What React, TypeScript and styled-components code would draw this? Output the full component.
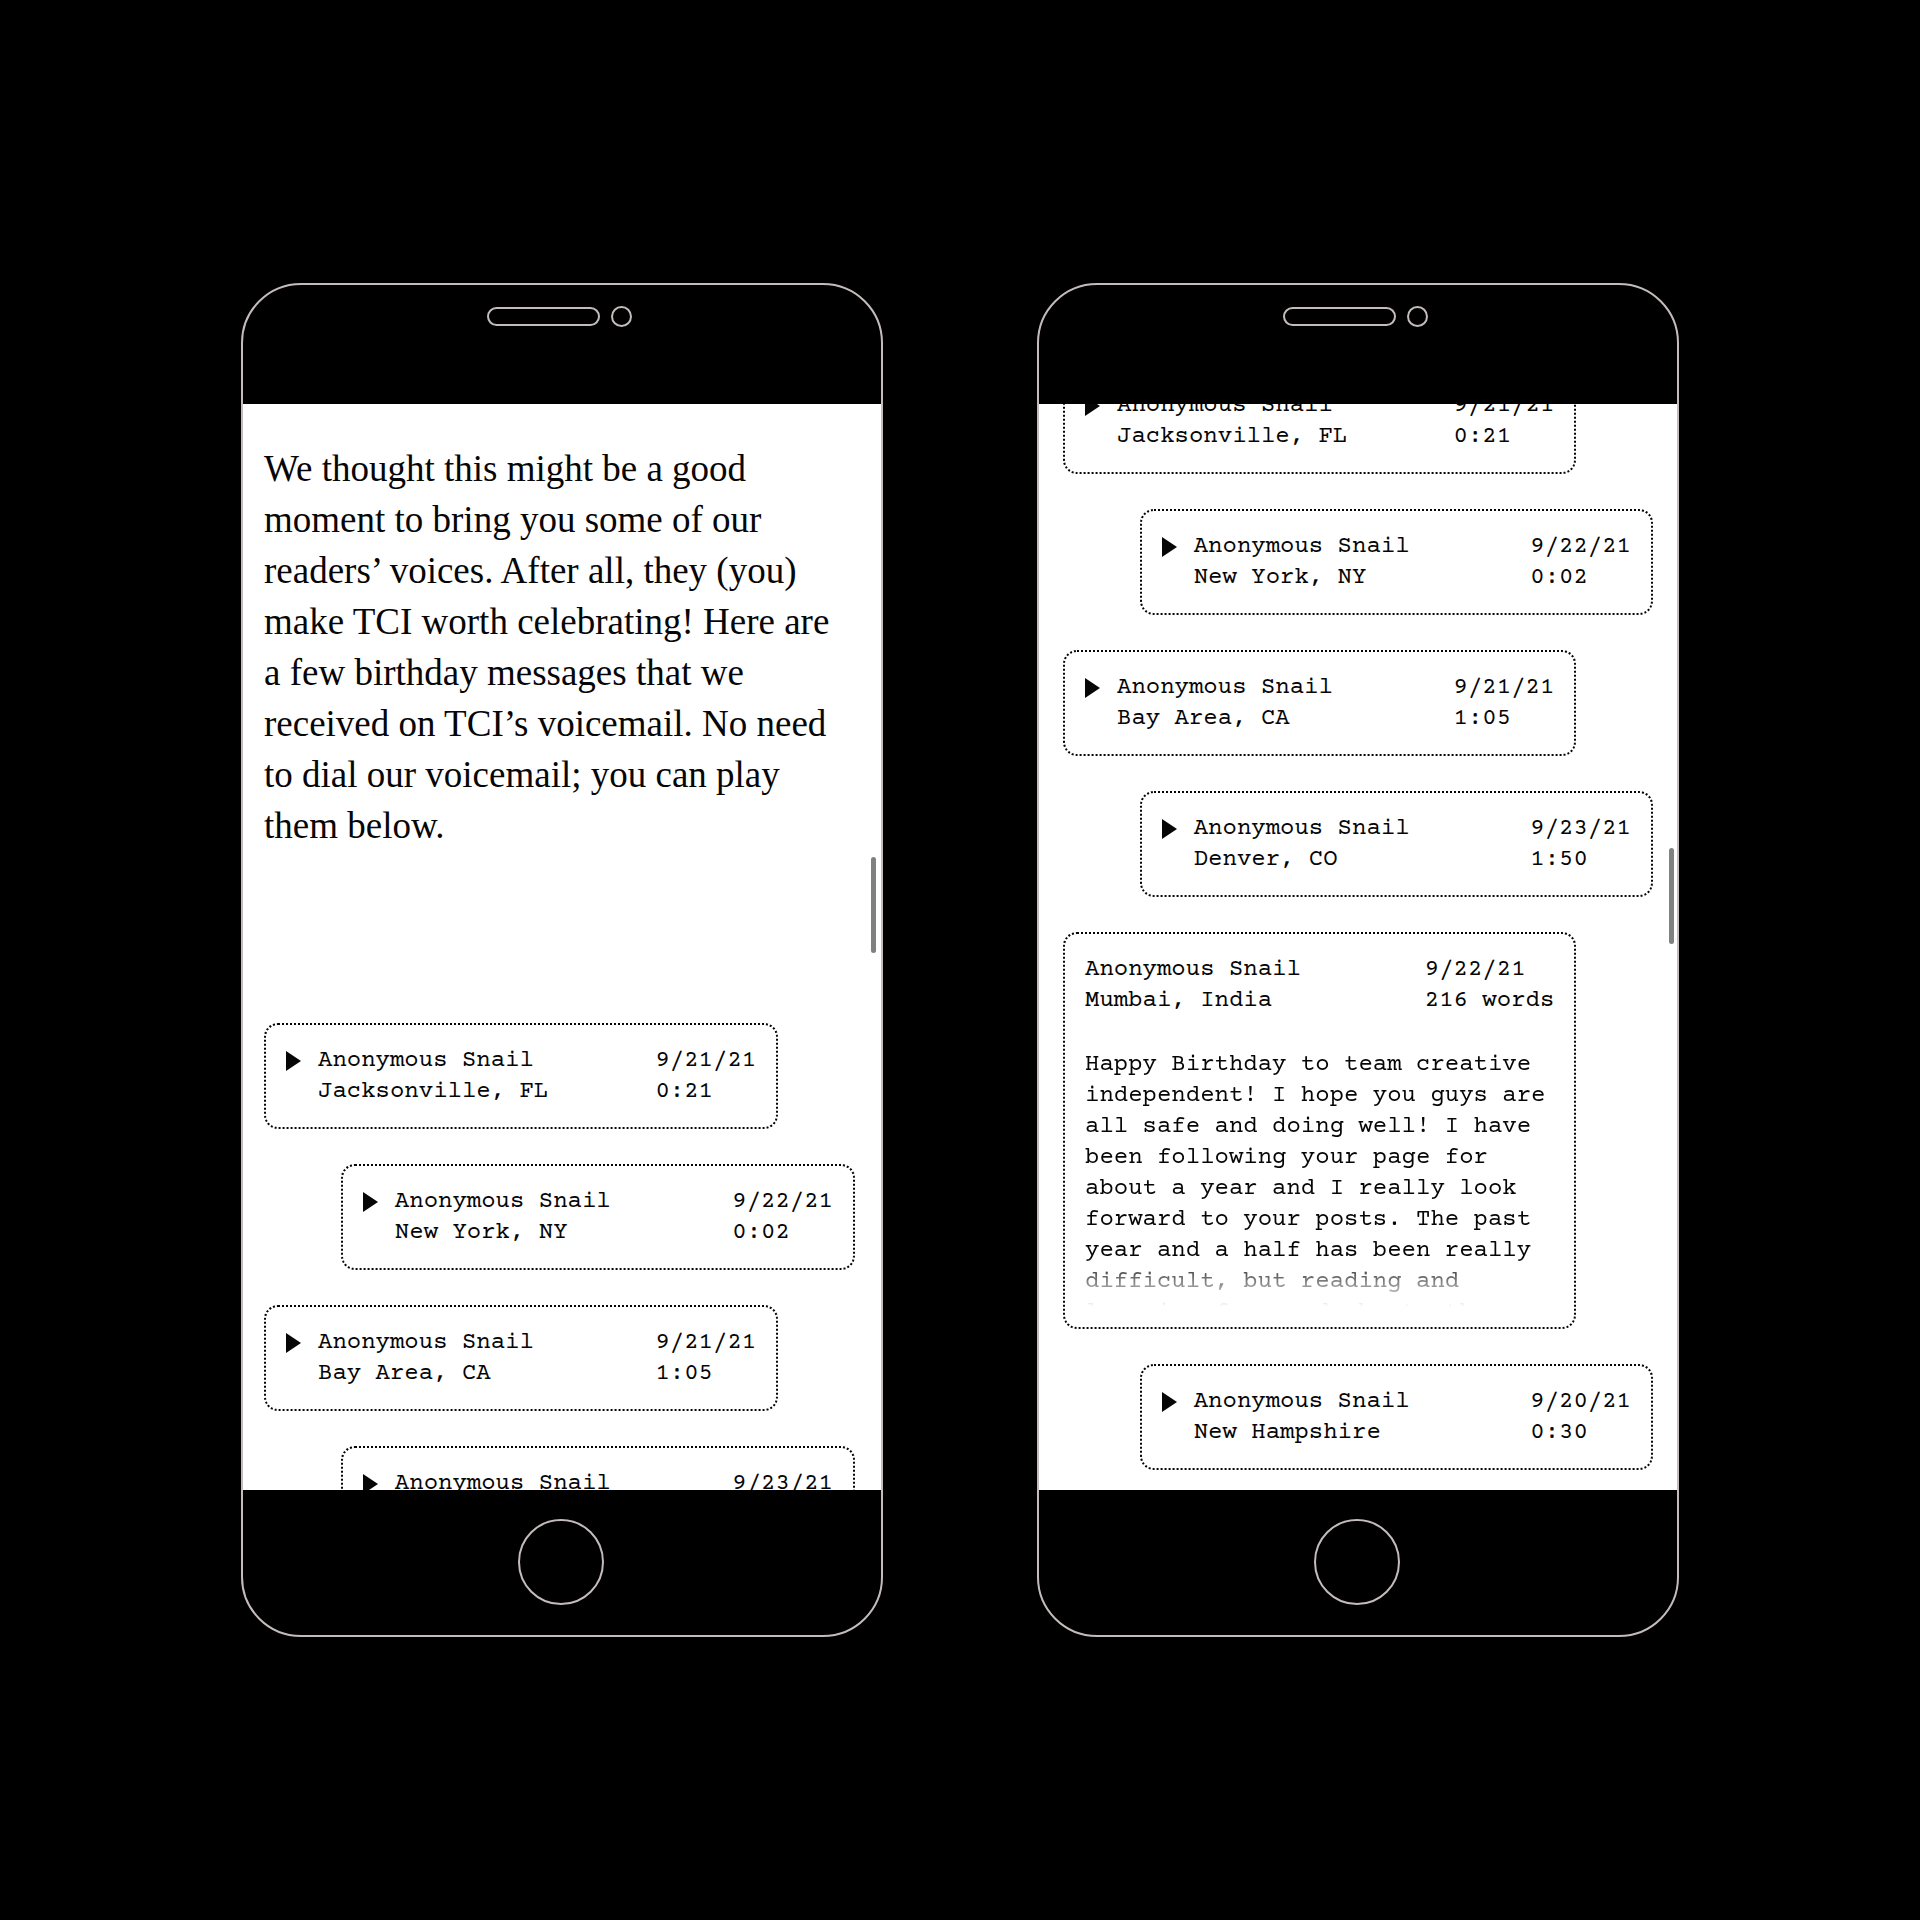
import React from 'react';
import styled, { createGlobalStyle } from 'styled-components';

const GlobalStyle = createGlobalStyle`
  *, *::before, *::after { box-sizing: border-box; }
  body { margin: 0; background: #000; }
`;

const line = '#c4bcbb';
const ink = '#060606';
const serif = 'Georgia, "Liberation Serif", serif';
const mono = '"Courier Prime", "Liberation Mono", monospace';

const Page = styled.main`
  display: flex;
  flex-wrap: wrap;
  align-items: center;
  justify-content: center;
  gap: 60px 154px;
  min-height: 100vh;
  background: #000;
`;

const Device = styled.section`
  width: 642px;
  max-width: 100%;
  overflow: hidden;
  border: 2px solid ${line};
  border-radius: 60px;
  background: #000;
`;

const TopBezel = styled.header`
  display: flex;
  justify-content: center;
  gap: 11px;
  height: 119px;
  padding: 21px 6px 0 0;
`;

const Speaker = styled.span`
  width: 113px;
  height: 19px;
  margin-top: 1px;
  border: 2px solid ${line};
  border-radius: 10px;
`;

const Camera = styled.span`
  width: 21px;
  height: 21px;
  border: 2px solid ${line};
  border-radius: 50%;
`;

const Screen = styled.div`
  position: relative;
  aspect-ratio: 638 / 1086;
  overflow: hidden;
  background: #fff;
  color: ${ink};
`;

const ScrollThumb = styled.div<{ $top: number; $right: number }>`
  position: absolute;
  top: ${(p) => p.$top}px;
  right: ${(p) => p.$right}px;
  width: 5px;
  height: 96px;
  border-radius: 3px;
  background: #808080;
`;

const BottomBezel = styled.footer`
  display: flex;
  justify-content: center;
  height: 145px;
  padding: 29px 2px 0 0;
`;

const HomeButton = styled.button`
  width: 86px;
  height: 86px;
  padding: 0;
  border: 2px solid ${line};
  border-radius: 50%;
  background: transparent;
`;

const Article = styled.div`
  padding: 39px 26px 0 21px;
`;

const Intro = styled.p`
  margin: 0 0 172px;
  font: 37px/51px ${serif};
`;

const ScrolledFeed = styled.div`
  margin-top: -36px;
  padding: 0 24px;
`;

const MessageList = styled.ul`
  display: flex;
  flex-direction: column;
  gap: 35px;
  margin: 0;
  padding: 0;
  list-style: none;
`;

const Card = styled.li<{ $side: 'left' | 'right' }>`
  align-self: ${(p) => (p.$side === 'left' ? 'flex-start' : 'flex-end')};
  width: 87%;
  padding: 20px;
  border: 2px dotted ${ink};
  border-radius: 14px;
  font: 24px/31px ${mono};
`;

const CardHead = styled.div`
  display: flex;
`;

const PlayButton = styled.button`
  display: flex;
  align-items: flex-start;
  width: 32px;
  padding: 6px 0 0;
  border: 0;
  background: transparent;
  color: inherit;
`;

const Sender = styled.div`
  flex: 1;
  min-width: 0;
`;

const Meta = styled.div`
  white-space: nowrap;
`;

const Body = styled.p`
  height: 258px;
  margin: 33px 0 0;
  overflow: hidden;
  mask-image: linear-gradient(#000 calc(100% - 50px), transparent);
`;

type Message = {
  place: string;
  date: string;
  length: string;
  body?: string;
};

const jacksonville: Message = { place: 'Jacksonville, FL', date: '9/21/21', length: '0:21' };
const newYork: Message = { place: 'New York, NY', date: '9/22/21', length: '0:02' };
const bayArea: Message = { place: 'Bay Area, CA', date: '9/21/21', length: '1:05' };
const denver: Message = { place: 'Denver, CO', date: '9/23/21', length: '1:50' };
const mumbai: Message = {
  place: 'Mumbai, India',
  date: '9/22/21',
  length: '216 words',
  body:
    'Happy Birthday to team creative independent! I hope you guys are all safe and doing well! I have been following your page for about a year and I really look forward to your posts. The past year and a half has been really difficult, but reading and learning from and about other',
};
const newHampshire: Message = { place: 'New Hampshire', date: '9/20/21', length: '0:30' };

function PlayIcon() {
  return (
    <svg width="15" height="20" viewBox="0 0 15 20" aria-hidden="true">
      <path d="M0 0 L15 10 L0 20 Z" fill="currentColor" />
    </svg>
  );
}

function Messages({ items }: { items: Message[] }) {
  return (
    <MessageList>
      {items.map((m, i) => (
        <Card key={m.place} $side={i % 2 === 0 ? 'left' : 'right'}>
          <CardHead>
            {!m.body && (
              <PlayButton type="button" aria-label={`Play message from ${m.place}`}>
                <PlayIcon />
              </PlayButton>
            )}
            <Sender>
              <div>Anonymous Snail</div>
              <div>{m.place}</div>
            </Sender>
            <Meta>
              <div>{m.date}</div>
              <div>{m.length}</div>
            </Meta>
          </CardHead>
          {m.body && <Body>{m.body}</Body>}
        </Card>
      ))}
    </MessageList>
  );
}

type PhoneProps = {
  thumbTop: number;
  thumbRight: number;
  children: React.ReactNode;
};

function Phone({ thumbTop, thumbRight, children }: PhoneProps) {
  return (
    <Device>
      <TopBezel>
        <Speaker />
        <Camera />
      </TopBezel>
      <Screen>
        {children}
        <ScrollThumb $top={thumbTop} $right={thumbRight} />
      </Screen>
      <BottomBezel>
        <HomeButton type="button" aria-label="Home" />
      </BottomBezel>
    </Device>
  );
}

export default function App() {
  return (
    <>
      <GlobalStyle />
      <Page>
        <Phone thumbTop={453} thumbRight={5}>
          <Article>
            <Intro>
              We thought this might be a good moment to bring you some of our readers’ voices. After
              all, they (you) make TCI worth celebrating! Here are a few birthday messages that we
              received on TCI’s voicemail. No need to dial our voicemail; you can play them below.
            </Intro>
            <Messages items={[jacksonville, newYork, bayArea, denver]} />
          </Article>
        </Phone>
        <Phone thumbTop={444} thumbRight={3}>
          <ScrolledFeed>
            <Messages items={[jacksonville, newYork, bayArea, denver, mumbai, newHampshire]} />
          </ScrolledFeed>
        </Phone>
      </Page>
    </>
  );
}
